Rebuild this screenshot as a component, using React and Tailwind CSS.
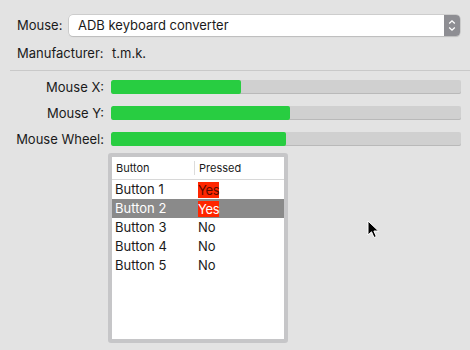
import React from "react";

const axes = [
  { label: "Mouse X:", pct: 37 },
  { label: "Mouse Y:", pct: 51 },
  { label: "Mouse Wheel:", pct: 50 },
];

const buttons = [
  { name: "Button 1", pressed: true },
  { name: "Button 2", pressed: true, selected: true },
  { name: "Button 3", pressed: false },
  { name: "Button 4", pressed: false },
  { name: "Button 5", pressed: false },
];

function Cursor() {
  return (
    <svg width="14" height="20" viewBox="0 0 14 20" className="absolute left-[367px] top-[220px]">
      <path d="M1 1 L1 15 L4.5 11.8 L7 17.5 L9.3 16.5 L6.9 11 L11.5 11 Z" fill="#000" stroke="#fff" strokeWidth="1" strokeLinejoin="round" />
    </svg>
  );
}

export default function App() {
  return (
    <div
      className="relative w-[470px] h-[350px] overflow-hidden bg-[#e3e3e3] text-[13px] text-[#1a1a1a]"
      style={{ fontFamily: '"Inter", "Liberation Sans", sans-serif' }}
    >
      {/* device picker */}
      <div className="flex items-center pt-[15px] pl-[17px]">
        <span className="w-[52px]">Mouse:</span>
        <div className="flex h-[21px] w-[391px] items-stretch rounded-[4px] bg-white shadow-[0_0_0_0.5px_#b8b8b8,0_1px_1px_#c4c4c4]">
          <span className="flex-1 pl-[9px] leading-[21px]">ADB keyboard converter</span>
          <div className="flex w-[16px] flex-col items-center justify-center rounded-r-[4px] bg-[#8e8e93]">
            <svg width="8" height="13" viewBox="0 0 8 13">
              <path d="M1.2 4.5 L4 1.8 L6.8 4.5 M1.2 8.5 L4 11.2 L6.8 8.5" fill="none" stroke="#fff" strokeWidth="1.3" />
            </svg>
          </div>
        </div>
      </div>

      <div className="flex h-[18px] items-center mt-[9px] pl-[17px]">
        <span className="w-[95px]">Manufacturer:</span>
        <span>t.m.k.</span>
      </div>

      <div className="ml-[10px] mt-[7px] h-px bg-[#c9c9c9]" />

      {/* axes */}
      <div className="mt-[9px] flex flex-col gap-[12px]">
        {axes.map(a => (
          <div key={a.label} className="flex h-[14px] items-center">
            <span className="w-[105px] pr-[1px] text-right leading-[14px]">{a.label}</span>
            <div className="ml-[6px] h-[14px] w-[350px] overflow-hidden rounded-[2px] bg-[#d0d0d0] shadow-[inset_0_-1px_0_#b9b9b9]">
              <div className="h-full rounded-[2px] bg-[#28cd41]" style={{ width: `${a.pct}%` }} />
            </div>
          </div>
        ))}
      </div>

      {/* button table */}
      <div className="ml-[108px] mt-[7px] h-[190px] w-[180px] rounded-[3px] bg-[#c6c6c8] p-[4px]">
        <div className="h-full bg-white">
          <div className="flex h-[23px] items-center border-b border-[#d8d8d8] text-[11px]">
            <span className="w-[82px] pl-[4px]">Button</span>
            <span className="h-[14px] border-l border-[#dcdcdc] pl-[4px] leading-[14px]">Pressed</span>
          </div>
          {buttons.map(b => (
            <div
              key={b.name}
              className={`flex h-[19px] items-center ${b.selected ? "bg-[#8a8a8a] text-white" : ""}`}
            >
              <span className="w-[86px] pl-[3px]">{b.name}</span>
              {b.pressed ? (
                <span className={`bg-[#ff2600] tracking-[-0.3px] leading-[16px] ${b.selected ? "text-white" : "text-[#5c0b00]"}`}>
                  Yes
                </span>
              ) : (
                <span>No</span>
              )}
            </div>
          ))}
        </div>
      </div>

      <Cursor />
    </div>
  );
}
